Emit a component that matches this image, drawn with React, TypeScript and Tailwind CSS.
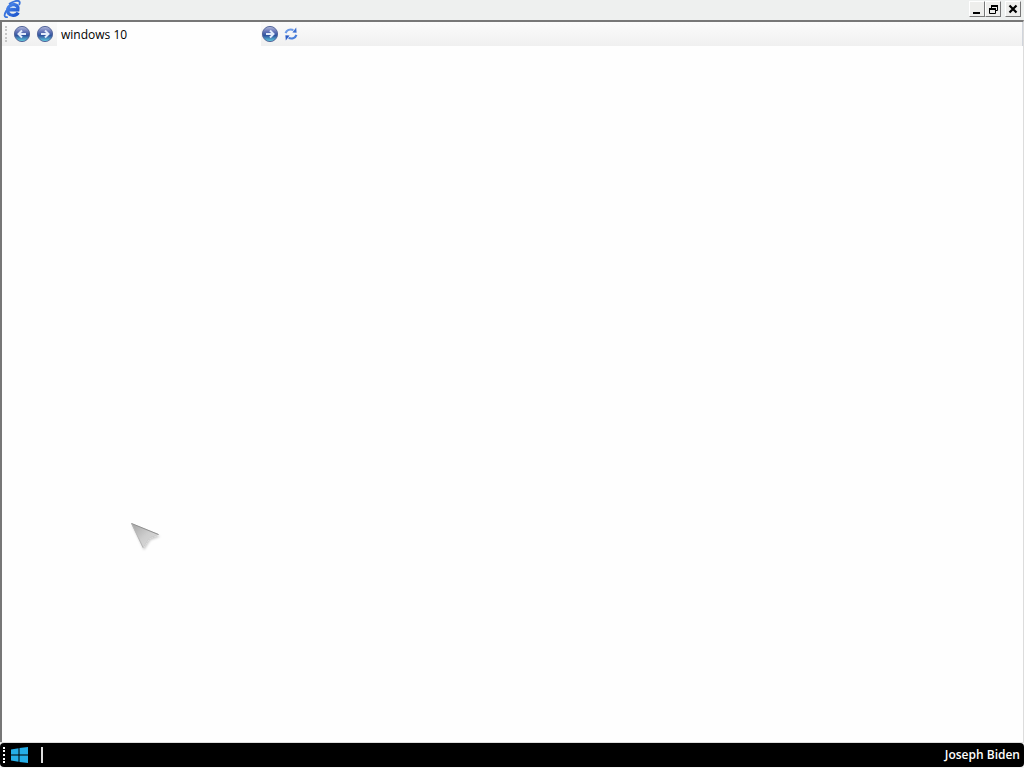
import { useState, type ReactNode } from 'react';

/* ─── ICONS ─── */

function BrowserLogo() {
  return (
    <svg width="18" height="18" viewBox="0 0 18 18" aria-hidden="true">
      <defs>
        <linearGradient id="logo-blue" x1="0" y1="0" x2="1" y2="1">
          <stop offset="0" stopColor="#4a86ea" />
          <stop offset="1" stopColor="#1c55cc" />
        </linearGradient>
      </defs>
      <path
        d="M15.2 12.6a5.800 5.200 0 0 1-9.800.6c-1.600-2.600-.8-6 1.800-7.600 2.800-1.700 6.400-1 7.400 1.200.4.900.4 1.900.2 3H6"
        fill="none"
        stroke="url(#logo-blue)"
        strokeWidth="3.4"
      />
      <path
        d="M3.400 10.500C.8 14.800.8 18 4.800 17M6 4C10.400.9 15 0 16.400 1.600c.6.8.3 2.200-.4 3.400"
        fill="none"
        stroke="#3a74dd"
        strokeWidth="1.8"
      />
      <path d="M7.800 8c.8-1.300 3.800-1.600 4.800-.2" fill="none" stroke="#a9cbfa" strokeWidth="1" />
    </svg>
  );
}

function ArrowOrb({ direction }: { direction: 'left' | 'right' }) {
  return (
    <svg width="18" height="18" viewBox="0 0 18 18" aria-hidden="true">
      <defs>
        <linearGradient id={`orb-${direction}`} x1="0" y1="0" x2="0" y2="1">
          <stop offset="0" stopColor="#b3bbdc" />
          <stop offset="0.35" stopColor="#6474b8" />
          <stop offset="0.6" stopColor="#2f559f" />
          <stop offset="1" stopColor="#63d3e3" />
        </linearGradient>
      </defs>
      <circle cx="9" cy="9" r="7.600" fill={`url(#orb-${direction})`} stroke="#56689c" strokeWidth="1" />
      <path
        d={direction === 'left' ? 'M13 9H6M9 5.500L5.500 9 9 12.500' : 'M5 9h7M9 5.500l3.500 3.500L9 12.500'}
        fill="none"
        stroke="#e3ecfb"
        strokeWidth="2"
      />
    </svg>
  );
}

function RefreshIcon() {
  return (
    <svg width="16" height="16" viewBox="0 0 16 16" aria-hidden="true">
      <path d="M2.600 7.200C3.600 4.200 6.600 2.800 10.400 4" fill="none" stroke="#6d9be8" strokeWidth="2.200" />
      <path d="M9.400 6.600l4.200.2L13.200 1.400z" fill="#3c6fd2" />
      <path d="M13.400 8.800c-1 3-4 4.400-7.800 3.200" fill="none" stroke="#4b80dc" strokeWidth="2.200" />
      <path d="M6.600 9.400L2.400 9.200l.4 5.400z" fill="#2d5dc6" />
    </svg>
  );
}

function WindowsLogo() {
  return (
    <svg width="18" height="16" viewBox="0 0 18 16" fill="#25aee8" aria-hidden="true">
      <path d="M0 2.400l7.500-1.200v6.300H0zM8.500 1L17 0v7.500H8.500zM0 8.500h7.500v6.300L0 13.600zM8.500 8.500H17V16l-8.500-1z" />
    </svg>
  );
}

function Pointer() {
  return (
    <svg width="34" height="32" viewBox="0 0 34 32" aria-hidden="true">
      <defs>
        <linearGradient id="pointer-face" x1="0" y1="0" x2="1" y2="1">
          <stop offset="0" stopColor="#a3a3a3" />
          <stop offset="0.5" stopColor="#cdcdcd" />
          <stop offset="1" stopColor="#dedede" />
        </linearGradient>
        <filter id="pointer-shadow" x="-20%" y="-20%" width="150%" height="150%">
          <feDropShadow dx="1" dy="2" stdDeviation="1" floodColor="#000" floodOpacity="0.2" />
        </filter>
      </defs>
      <path
        d="M1.500 1.500l27 11-9.200 3.600-6.200 9.600z"
        fill="url(#pointer-face)"
        stroke="#c3c3c3"
        strokeWidth="0.6"
        filter="url(#pointer-shadow)"
      />
      <path d="M1.500 1.500l27 11" stroke="#8f8f8f" strokeWidth="1" />
      <path d="M1.500 1.500l11.600 24.200" stroke="#b0b0b0" strokeWidth="0.8" />
    </svg>
  );
}

/* ─── CONTROLS ─── */

function CaptionButton({ label, children }: { label: string; children: ReactNode }) {
  return (
    <button
      type="button"
      aria-label={label}
      className="flex h-4 w-4 items-center justify-center border border-t-white border-l-white border-r-[#777] border-b-[#777] bg-[#eeeeec]"
    >
      {children}
    </button>
  );
}

function ToolButton({ label, children }: { label: string; children: ReactNode }) {
  return (
    <button type="button" aria-label={label} className="flex shrink-0 items-center justify-center">
      {children}
    </button>
  );
}

/* ─── WINDOW ─── */

function TitleBar() {
  return (
    <header className="flex h-5 shrink-0 items-start justify-between bg-[#eef0ef] px-[3px]">
      <BrowserLogo />
      <div className="flex items-center pt-px">
        <CaptionButton label="Minimize">
          <svg width="10" height="10" viewBox="0 0 10 10" aria-hidden="true">
            <path d="M1 8h7v2H1z" />
          </svg>
        </CaptionButton>
        <CaptionButton label="Restore">
          <svg width="10" height="10" viewBox="0 0 10 10" aria-hidden="true">
            <path d="M3.500 4V1.500h6v5H7" fill="none" stroke="#000" />
            <path d="M3 1h7v2H3zM1 4h7v2H1z" />
            <path d="M1.500 4.500h6v5h-6z" fill="#eeeeec" stroke="#000" />
            <path d="M1 4h7v2H1z" />
          </svg>
        </CaptionButton>
        <div className="ml-1 flex">
          <CaptionButton label="Close">
            <svg width="10" height="10" viewBox="0 0 10 10" aria-hidden="true">
              <path d="M1.500 1.500l7 7M8.500 1.500l-7 7" stroke="#000" strokeWidth="2.200" />
            </svg>
          </CaptionButton>
        </div>
      </div>
    </header>
  );
}

function Toolbar() {
  const [address, setAddress] = useState('windows 10');

  return (
    <form
      className="flex h-6 shrink-0 items-center border-r border-gray-300 bg-linear-to-b from-[#fbfbfb] to-[#f0f0f0] pl-[3px]"
      onSubmit={(e) => e.preventDefault()}
    >
      <div className="mr-1.5 h-4 border-l-2 border-dotted border-[#c5c5c5]" />
      <div className="flex gap-[5px]">
        <ToolButton label="Back">
          <ArrowOrb direction="left" />
        </ToolButton>
        <ToolButton label="Forward">
          <ArrowOrb direction="right" />
        </ToolButton>
      </div>
      <input
        type="text"
        aria-label="Address"
        value={address}
        onChange={(e) => setAddress(e.target.value)}
        className="ml-[3px] h-6 w-51 bg-[#fefefe] px-1 text-xs text-black outline-none"
      />
      <div className="flex items-center gap-1">
        <ToolButton label="Go">
          <ArrowOrb direction="right" />
        </ToolButton>
        <ToolButton label="Refresh">
          <RefreshIcon />
        </ToolButton>
      </div>
    </form>
  );
}

function Taskbar() {
  return (
    <footer className="flex h-6 shrink-0 items-center rounded-sm bg-black pr-1 pl-[3px] text-white">
      <div className="h-4 w-1 border-l-2 border-dotted border-white" />
      <button type="button" aria-label="Start" className="ml-1 flex">
        <WindowsLogo />
      </button>
      <div className="ml-3 h-4 w-0.5 bg-[#dedede]" />
      <span className="ml-auto text-xs font-semibold">Joseph Biden</span>
    </footer>
  );
}

export default function App() {
  return (
    <div className="flex h-screen flex-col bg-[#f4f4f4] pb-px font-['Open_Sans',sans-serif]">
      <TitleBar />
      <div className="flex min-h-0 grow flex-col border-t-2 border-r border-l-2 border-t-[#777] border-r-[#dcdcdc] border-l-[#777]">
        <Toolbar />
        <main className="grow bg-[#fefefe]" />
      </div>
      <div className="h-px shrink-0 bg-[#dedede]" />
      <Taskbar />
      <div className="pointer-events-none absolute top-[522px] left-[130px]">
        <Pointer />
      </div>
    </div>
  );
}
